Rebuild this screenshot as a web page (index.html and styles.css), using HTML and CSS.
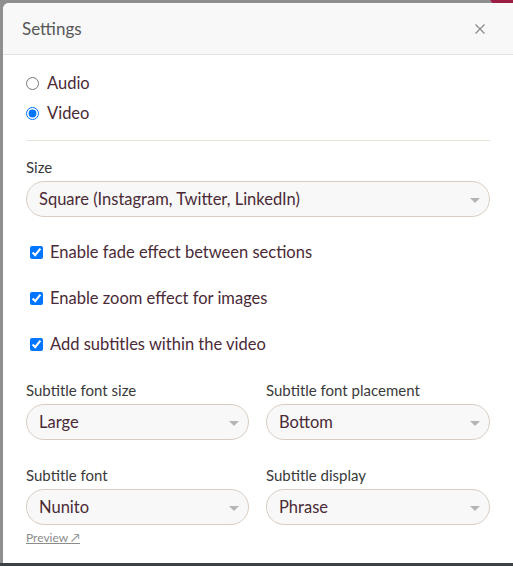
FILE: index.html
```html
<!DOCTYPE html>
<html>
<head>
<meta charset="utf-8">
<link rel="stylesheet" href="styles.css">
</head>
<body>
<div class="bg-blob"></div>
<div class="modal">
  <div class="modal-header">
    <span class="modal-title">Settings</span>
    <svg class="close" width="10" height="10" viewBox="0 0 10 10"><path d="M0.5 0.5 L9.5 9.5 M9.5 0.5 L0.5 9.5" stroke="#8a8a8a" stroke-width="1.2" fill="none"/></svg>
  </div>
  <div class="modal-body">
    <label class="radio-row"><input type="radio" name="kind"> <span>Audio</span></label>
    <label class="radio-row"><input type="radio" name="kind" checked> <span>Video</span></label>
    <hr class="divider">
    <div class="field">
      <div class="field-label">Size</div>
      <div class="select"><span>Square (Instagram, Twitter, LinkedIn)</span><i class="caret"></i></div>
    </div>
    <div class="checks">
      <label class="check-row"><input type="checkbox" checked> <span>Enable fade effect between sections</span></label>
      <label class="check-row"><input type="checkbox" checked> <span>Enable zoom effect for images</span></label>
      <label class="check-row"><input type="checkbox" checked> <span>Add subtitles within the video</span></label>
    </div>
    <div class="grid">
      <div class="field">
        <div class="field-label">Subtitle font size</div>
        <div class="select"><span>Large</span><i class="caret"></i></div>
      </div>
      <div class="field">
        <div class="field-label">Subtitle font placement</div>
        <div class="select"><span>Bottom</span><i class="caret"></i></div>
      </div>
      <div class="field">
        <div class="field-label">Subtitle font</div>
        <div class="select"><span>Nunito</span><i class="caret"></i></div>
        <a class="preview">Preview &#x2197;</a>
      </div>
      <div class="field">
        <div class="field-label">Subtitle display</div>
        <div class="select"><span>Phrase</span><i class="caret"></i></div>
      </div>
    </div>
  </div>
</div>
<div class="bottom-strip"></div>
</body>
</html>
```
FILE: styles.css
```css
html, body {
  margin: 0;
  padding: 0;
  height: 566px;
  overflow: hidden;
}
body {
  background: #8f8f8f;
  font-family: Lato, "Noto Sans", sans-serif;
  position: relative;
  padding-top: 3px;
  box-sizing: border-box;
}
.bg-blob {
  position: absolute;
  left: 490px;
  top: -10px;
  width: 23px;
  height: 16px;
  border-radius: 50% 0 0 50%;
  background: #9b1d44;
}
.modal {
  position: relative;
  margin-left: 3px;
  width: 510px;
  height: 560px;
  background: #fff;
  border-radius: 6px 0 0 0;
  overflow: hidden;
}
.modal-header {
  height: 51px;
  background: #f8f8f8;
  border-bottom: 1px solid #e3e3e3;
  display: flex;
  align-items: center;
  justify-content: space-between;
  padding: 0 28px 0 19px;
}
.modal-title {
  font-size: 17px;
  color: #575757;
  margin-top: -1px;
}
.close {
  margin-top: 1px;
}
.modal-body {
  width: 464px;
  padding: 13px 0 0 23px;
  color: #4a2a36;
}
.radio-row {
  display: flex;
  align-items: center;
  gap: 8px;
  height: 30px;
  font-size: 16.5px;
}
.radio-row input {
  margin: 0;
  width: 13px;
  height: 13px;
}
.divider {
  border: none;
  border-top: 1px solid #e9e3dc;
  margin: 12px 0 0 0;
}
.field {
  display: flex;
  flex-direction: column;
}
.field-label {
  font-size: 15px;
  color: #3a3a3a;
  height: 20px;
  line-height: 20px;
  margin-bottom: 4px;
}
.modal-body > .field {
  margin-top: 16px;
}
.select {
  height: 36px;
  box-sizing: border-box;
  border: 1px solid #d8cdc2;
  border-radius: 18px;
  background: #f8f8f8;
  display: flex;
  align-items: center;
  justify-content: space-between;
  padding: 0 9px 0 12px;
  font-size: 16.5px;
  color: #4a2a36;
}
.caret {
  width: 0;
  height: 0;
  border-left: 5px solid transparent;
  border-right: 5px solid transparent;
  border-top: 5px solid #b5b5b5;
  margin-top: 2px;
}
.checks {
  display: flex;
  flex-direction: column;
  gap: 16px;
  margin-top: 20px;
  padding-left: 4px;
}
.check-row {
  display: flex;
  align-items: center;
  gap: 7px;
  height: 30px;
  font-size: 16.5px;
}
.check-row input {
  margin: 0;
  width: 13px;
  height: 13px;
}
.grid {
  display: grid;
  grid-template-columns: 223px 224px;
  column-gap: 17px;
  row-gap: 25px;
  margin-top: 21px;
  align-items: start;
}
.preview {
  font-size: 12px;
  color: #8c8c8c;
  text-decoration: underline;
  margin-top: 5px;
  align-self: flex-start;
}
.bottom-strip {
  height: 3px;
  background: #3c4147;
}
```
